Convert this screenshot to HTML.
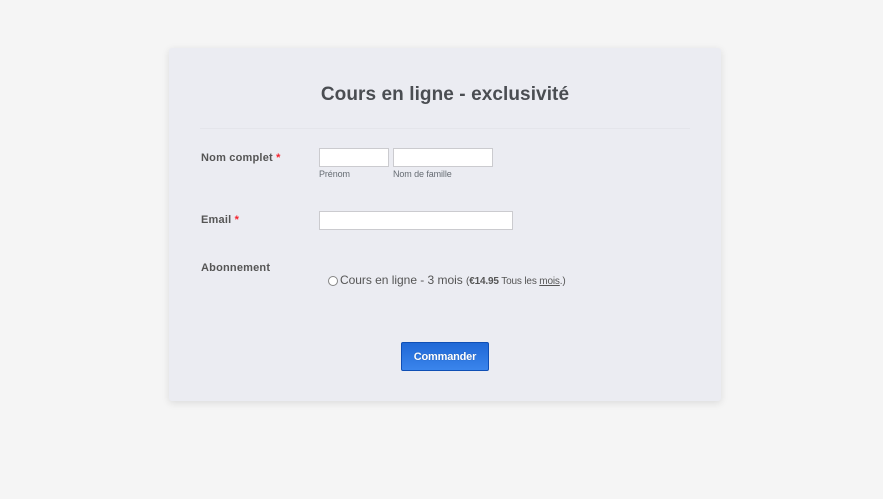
<!DOCTYPE html>
<html lang="fr">
<head>
<meta charset="utf-8">
<title>Cours en ligne - exclusivité</title>
<style>
html,body{margin:0;padding:0;width:883px;height:499px;overflow:hidden;background:#f5f5f5;font-family:"Liberation Sans",Arial,sans-serif;color:#555}
.abs{position:absolute;white-space:nowrap}
#card{position:absolute;left:169px;top:48px;width:552px;height:353px;background:#ebecf2;border-radius:3px;box-shadow:0 2px 8px rgba(0,0,0,.11)}
h1{position:absolute;margin:0;left:169px;width:552px;top:83px;text-align:center;font-size:19px;line-height:23px;font-weight:bold;color:#4a4d52;letter-spacing:.08px}
#hr{position:absolute;left:200px;top:128px;width:490px;height:1px;background:#e4e5eb}
.lab{font-size:11px;font-weight:bold;line-height:13px;color:#555;letter-spacing:.2px}
.lab i{font-style:normal;color:#f5222d}
.inp{position:absolute;box-sizing:border-box;background:#fff;border:1px solid #cbcbcf;height:19px}
.sub{font-size:9px;line-height:12px;color:#666c73;letter-spacing:-.1px}
#radio{position:absolute;left:328px;top:276px;width:10px;height:10px;box-sizing:border-box;border:1px solid #858585;border-radius:50%;background:#fff}
#btn{position:absolute;left:401px;top:342px;width:88px;height:29px;box-sizing:border-box;border:1px solid #0f4fb5;border-radius:2px;background:linear-gradient(#1f68d6,#3a85ec);color:#fff;font:bold 11px/29px "Liberation Sans",Arial,sans-serif;letter-spacing:-.2px;text-align:center;text-shadow:0 0 1px rgba(0,0,0,.3)}
</style>
</head>
<body>
<div id="card"></div>
<h1>Cours en ligne - exclusivité</h1>
<div id="hr"></div>

<div class="abs lab" style="left:201px;top:152px">Nom complet <i>*</i></div>
<div class="inp" style="left:319px;top:148px;width:70px"></div>
<div class="inp" style="left:393px;top:148px;width:100px"></div>
<div class="abs sub" style="left:319px;top:168px">Prénom</div>
<div class="abs sub" style="left:393px;top:168px">Nom de famille</div>

<div class="abs lab" style="left:201px;top:214px">Email <i>*</i></div>
<div class="inp" style="left:319px;top:211px;width:194px"></div>

<div class="abs lab" style="left:201px;top:262px">Abonnement</div>
<div id="radio"></div>
<div class="abs" style="left:340px;top:273px;font-size:12px;line-height:14px;color:#555;letter-spacing:-.03px">Cours en ligne - 3 mois <span style="font-size:10px;color:#555;letter-spacing:-.16px">(<b>€14.95</b> Tous les <u>mois</u>.)</span></div>

<div id="btn">Commander</div>
</body>
</html>
